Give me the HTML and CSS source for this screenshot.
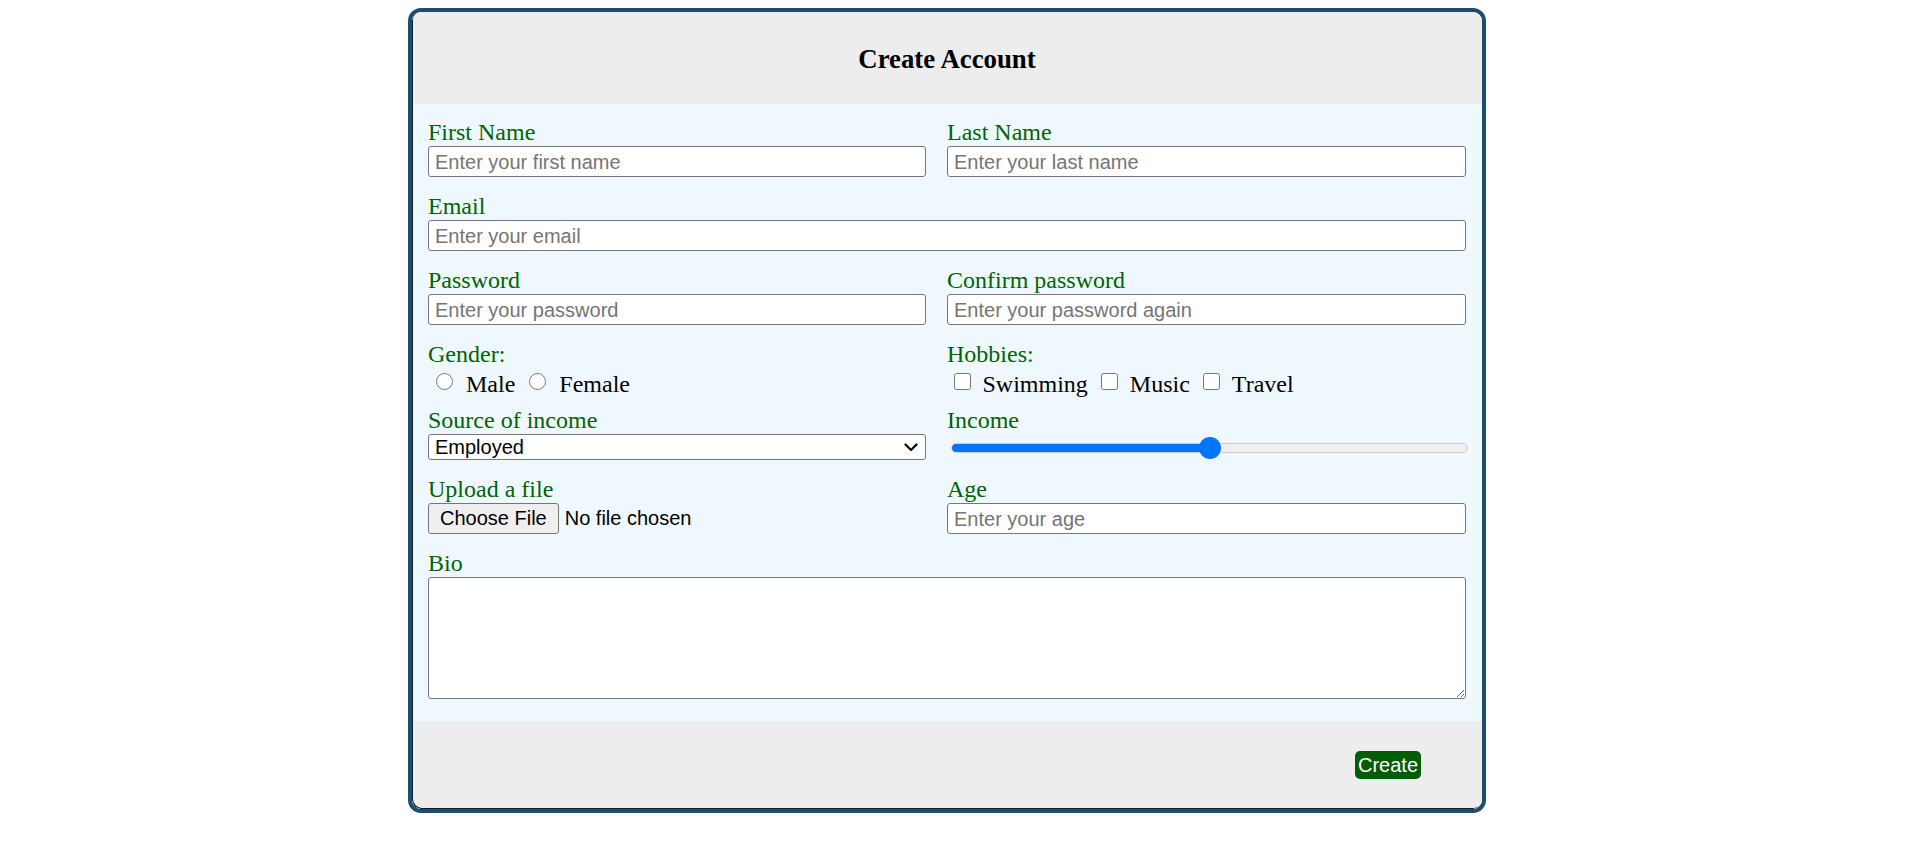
FILE: index.html
```html
<!DOCTYPE html>
<html lang="en">
<head>
<meta charset="utf-8">
<title>Create Account</title>
<link rel="stylesheet" href="styles.css">
</head>
<body>
<form class="card">
  <header class="card-head">
    <h1 class="title">Create Account</h1>
  </header>
  <div class="card-body">
    <div class="field">
      <label class="lbl" for="fn">First Name</label>
      <input class="txt" id="fn" type="text" placeholder="Enter your first name">
    </div>
    <div class="field">
      <label class="lbl" for="ln">Last Name</label>
      <input class="txt" id="ln" type="text" placeholder="Enter your last name">
    </div>
    <div class="field wide">
      <label class="lbl" for="em">Email</label>
      <input class="txt" id="em" type="email" placeholder="Enter your email">
    </div>
    <div class="field">
      <label class="lbl" for="pw">Password</label>
      <input class="txt" id="pw" type="password" placeholder="Enter your password">
    </div>
    <div class="field">
      <label class="lbl" for="pw2">Confirm password</label>
      <input class="txt" id="pw2" type="password" placeholder="Enter your password again">
    </div>
    <div class="field">
      <span class="lbl">Gender:</span>
      <div class="opts radios">
        <label class="opt"><input type="radio" name="g"><span>Male</span></label>
        <label class="opt"><input type="radio" name="g"><span>Female</span></label>
      </div>
    </div>
    <div class="field">
      <span class="lbl">Hobbies:</span>
      <div class="opts checks">
        <label class="opt"><input type="checkbox"><span>Swimming</span></label>
        <label class="opt"><input type="checkbox"><span>Music</span></label>
        <label class="opt"><input type="checkbox"><span>Travel</span></label>
      </div>
    </div>
    <div class="field">
      <label class="lbl" for="src">Source of income</label>
      <div class="sel-wrap">
        <select class="sel" id="src">
          <option>Employed</option>
          <option>Self-employed</option>
          <option>Unemployed</option>
        </select>
        <svg class="chev" width="14" height="9" viewBox="0 0 14 9" aria-hidden="true"><path d="M1.5 1.5 L7 7 L12.5 1.5" fill="none" stroke="#000" stroke-width="2.2" stroke-linecap="round" stroke-linejoin="round"/></svg>
      </div>
    </div>
    <div class="field">
      <label class="lbl" for="inc">Income</label>
      <input class="range" id="inc" type="range" min="0" max="100" value="50">
    </div>
    <div class="field">
      <label class="lbl" for="file">Upload a file</label>
      <input class="file" id="file" type="file">
    </div>
    <div class="field">
      <label class="lbl" for="age">Age</label>
      <input class="txt" id="age" type="number" placeholder="Enter your age">
    </div>
    <div class="field wide">
      <label class="lbl" for="bio">Bio</label>
      <textarea class="area" id="bio"></textarea>
    </div>
  </div>
  <footer class="card-foot">
    <button class="btn" type="submit">Create</button>
  </footer>
</form>
</body>
</html>
```
FILE: styles.css
```css
html, body {
  margin: 0;
  padding: 0;
  background: #ffffff;
}

body {
  padding: 8px;
  font-family: "Liberation Serif", "Times New Roman", serif;
}

.card {
  width: 1078px;
  box-sizing: border-box;
  margin: 0 0 0 400px;
  border: 4px solid #1f4d6d;
  border-radius: 13px;
  overflow: hidden;
  background: #f0f8ff;
  position: relative;
}

.card::after {
  content: "";
  position: absolute;
  inset: 0;
  border-radius: 9px;
  box-shadow: inset 1px -1px 0 #0d1d2a;
  pointer-events: none;
}

.card-head {
  height: 92px;
  background: #ededed;
  display: flex;
  align-items: center;
  justify-content: center;
  padding-top: 2px;
  box-sizing: border-box;
}

.title {
  margin: 0;
  font-family: "Liberation Serif", "Times New Roman", serif;
  font-size: 26.8px;
  font-weight: bold;
  color: #000;
}

.card-body {
  display: grid;
  grid-template-columns: 498px 519px;
  column-gap: 21px;
  row-gap: 18px;
  padding: 17px 16px 22px 16px;
  background: #f0f8ff;
}

.field {
  min-width: 0;
}

.wide {
  grid-column: 1 / span 2;
}

.lbl {
  display: block;
  height: 25px;
  line-height: 22px;
  font-size: 24px;
  color: #006400;
  white-space: nowrap;
}

.txt {
  display: block;
  width: 100%;
  height: 31px;
  box-sizing: border-box;
  margin: 0;
  padding: 2px 6px 0 6px;
  border: 1px solid #767676;
  border-radius: 3px;
  background: #fff;
  font-family: "Liberation Sans", Arial, sans-serif;
  font-size: 20px;
  color: #000;
}

.txt::placeholder {
  color: #757575;
}

.txt[type=number]::-webkit-inner-spin-button {
  display: none;
}

.opts {
  display: flex;
  align-items: flex-start;
  margin-top: 3px;
  height: 20px;
  padding-left: 8px;
  gap: 14px;
}

.checks {
  padding-left: 7px;
  gap: 13.5px;
}

.opt {
  display: flex;
  align-items: flex-start;
  font-size: 24px;
  line-height: 27px;
  color: #000;
  white-space: nowrap;
}

.opt input {
  width: 17px;
  height: 17px;
  margin: 2px 13px 0 0;
  flex: none;
}

.checks .opt input {
  margin-right: 11.5px;
}

.sel-wrap {
  position: relative;
}

.sel {
  -webkit-appearance: none;
  appearance: none;
  display: block;
  width: 100%;
  height: 26px;
  box-sizing: border-box;
  margin: 0;
  padding: 0 30px 0 6px;
  border: 1px solid #767676;
  border-radius: 3px;
  background: #fff;
  font-family: "Liberation Sans", Arial, sans-serif;
  font-size: 20px;
  line-height: 24px;
  color: #000;
}

.chev {
  position: absolute;
  right: 8px;
  top: 9px;
  pointer-events: none;
}

.range {
  -webkit-appearance: none;
  appearance: none;
  display: block;
  width: calc(100% - 2px);
  height: 26px;
  margin: 1px 0 -1px 4px;
  padding: 0;
  background: transparent;
}

.range::-webkit-slider-runnable-track {
  height: 10px;
  box-sizing: border-box;
  border-radius: 5px;
  border: 1px solid #cfcfcf;
  background: linear-gradient(to right, #0075ff 50%, #efefef 50%);
}

.range::-webkit-slider-thumb {
  -webkit-appearance: none;
  appearance: none;
  width: 22px;
  height: 22px;
  margin-top: -7px;
  border-radius: 50%;
  background: #0075ff;
  border: none;
}

.file {
  display: block;
  height: 31px;
  margin: 0;
  padding: 0;
  font-family: "Liberation Sans", Arial, sans-serif;
  font-size: 20px;
  color: #000;
}

.file::file-selector-button {
  height: 31px;
  box-sizing: border-box;
  margin: 0 6px 0 0;
  padding: 0 11px;
  border: 1px solid #767676;
  border-radius: 3px;
  background: #efefef;
  font-family: "Liberation Sans", Arial, sans-serif;
  font-size: 20px;
  color: #000;
}

.area {
  display: block;
  width: 100%;
  height: 122px;
  box-sizing: border-box;
  margin: 0;
  padding: 4px 7px;
  border: 1px solid #767676;
  border-radius: 3px;
  background: #fff;
  font-family: "Liberation Sans", Arial, sans-serif;
  font-size: 20px;
}

.card-foot {
  height: 88px;
  background: #ededed;
  display: flex;
  align-items: center;
  justify-content: flex-end;
  padding-right: 61px;
}

.btn {
  height: 28px;
  margin: 0;
  padding: 0 3px;
  border: none;
  border-radius: 5px;
  background: #045c05;
  color: #fff;
  font-family: "Liberation Sans", Arial, sans-serif;
  font-size: 20px;
  line-height: 28px;
}
```
